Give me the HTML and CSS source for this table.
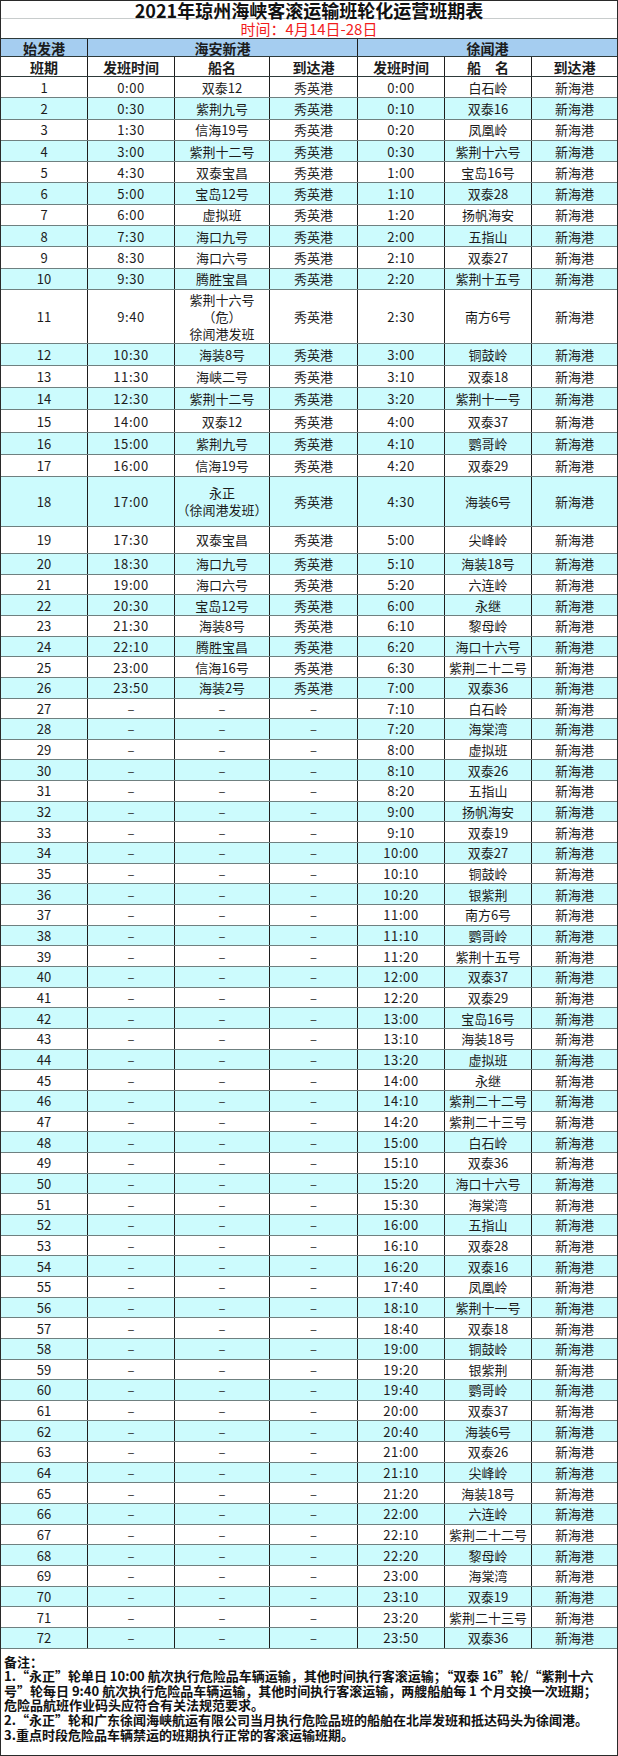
FILE: index.html
```html
<!DOCTYPE html>
<html lang="zh-CN">
<head>
<meta charset="utf-8">
<title>2021年琼州海峡客滚运输班轮化运营班期表</title>
<link rel="stylesheet" href="styles.css">
</head>
<body>
<div class="sheet">
  <div class="title">2021年琼州海峡客滚运输班轮化运营班期表</div>
  <div class="subtitle">时间：4月14日-28日</div>
  <div class="row hdr1"><span>始发港</span><span class="span3">海安新港</span><span class="span3">徐闻港</span></div>
  <div class="row hdr2"><span>班期</span><span>发班时间</span><span>船名</span><span>到达港</span><span>发班时间</span><span>船　名</span><span>到达港</span></div>

  <div class="row ha"><span>1</span><span class="t">0:00</span><span>双泰12</span><span>秀英港</span><span class="t">0:00</span><span>白石岭</span><span>新海港</span></div>
  <div class="row ha cy"><span>2</span><span class="t">0:30</span><span>紫荆九号</span><span>秀英港</span><span class="t">0:10</span><span>双泰16</span><span>新海港</span></div>
  <div class="row ha"><span>3</span><span class="t">1:30</span><span>信海19号</span><span>秀英港</span><span class="t">0:20</span><span>凤凰岭</span><span>新海港</span></div>
  <div class="row ha cy"><span>4</span><span class="t">3:00</span><span>紫荆十二号</span><span>秀英港</span><span class="t">0:30</span><span>紫荆十六号</span><span>新海港</span></div>
  <div class="row ha"><span>5</span><span class="t">4:30</span><span>双泰宝昌</span><span>秀英港</span><span class="t">1:00</span><span>宝岛16号</span><span>新海港</span></div>
  <div class="row ha cy"><span>6</span><span class="t">5:00</span><span>宝岛12号</span><span>秀英港</span><span class="t">1:10</span><span>双泰28</span><span>新海港</span></div>
  <div class="row ha"><span>7</span><span class="t">6:00</span><span>虚拟班</span><span>秀英港</span><span class="t">1:20</span><span>扬帆海安</span><span>新海港</span></div>
  <div class="row ha cy"><span>8</span><span class="t">7:30</span><span>海口九号</span><span>秀英港</span><span class="t">2:00</span><span>五指山</span><span>新海港</span></div>
  <div class="row ha"><span>9</span><span class="t">8:30</span><span>海口六号</span><span>秀英港</span><span class="t">2:10</span><span>双泰27</span><span>新海港</span></div>
  <div class="row ha cy"><span>10</span><span class="t">9:30</span><span>腾胜宝昌</span><span>秀英港</span><span class="t">2:20</span><span>紫荆十五号</span><span>新海港</span></div>
  <div class="row h11"><span>11</span><span class="t">9:40</span><span class="multi">紫荆十六号<br>（危）<br>徐闻港发班</span><span>秀英港</span><span class="t">2:30</span><span>南方6号</span><span>新海港</span></div>
  <div class="row hb cy"><span>12</span><span class="t">10:30</span><span>海装8号</span><span>秀英港</span><span class="t">3:00</span><span>铜鼓岭</span><span>新海港</span></div>
  <div class="row hb"><span>13</span><span class="t">11:30</span><span>海峡二号</span><span>秀英港</span><span class="t">3:10</span><span>双泰18</span><span>新海港</span></div>
  <div class="row hb cy"><span>14</span><span class="t">12:30</span><span>紫荆十二号</span><span>秀英港</span><span class="t">3:20</span><span>紫荆十一号</span><span>新海港</span></div>
  <div class="row hb"><span>15</span><span class="t">14:00</span><span>双泰12</span><span>秀英港</span><span class="t">4:00</span><span>双泰37</span><span>新海港</span></div>
  <div class="row hb cy"><span>16</span><span class="t">15:00</span><span>紫荆九号</span><span>秀英港</span><span class="t">4:10</span><span>鹦哥岭</span><span>新海港</span></div>
  <div class="row hb"><span>17</span><span class="t">16:00</span><span>信海19号</span><span>秀英港</span><span class="t">4:20</span><span>双泰29</span><span>新海港</span></div>
  <div class="row h18 cy"><span>18</span><span class="t">17:00</span><span class="multi">永正<br>（徐闻港发班）</span><span>秀英港</span><span class="t">4:30</span><span>海装6号</span><span>新海港</span></div>
  <div class="row h19"><span>19</span><span class="t">17:30</span><span>双泰宝昌</span><span>秀英港</span><span class="t">5:00</span><span>尖峰岭</span><span>新海港</span></div>
  <div class="row hc cy"><span>20</span><span class="t">18:30</span><span>海口九号</span><span>秀英港</span><span class="t">5:10</span><span>海装18号</span><span>新海港</span></div>
  <div class="row hc"><span>21</span><span class="t">19:00</span><span>海口六号</span><span>秀英港</span><span class="t">5:20</span><span>六连岭</span><span>新海港</span></div>
  <div class="row hc cy"><span>22</span><span class="t">20:30</span><span>宝岛12号</span><span>秀英港</span><span class="t">6:00</span><span>永继</span><span>新海港</span></div>
  <div class="row hc"><span>23</span><span class="t">21:30</span><span>海装8号</span><span>秀英港</span><span class="t">6:10</span><span>黎母岭</span><span>新海港</span></div>
  <div class="row hc cy"><span>24</span><span class="t">22:10</span><span>腾胜宝昌</span><span>秀英港</span><span class="t">6:20</span><span>海口十六号</span><span>新海港</span></div>
  <div class="row hc"><span>25</span><span class="t">23:00</span><span>信海16号</span><span>秀英港</span><span class="t">6:30</span><span>紫荆二十二号</span><span>新海港</span></div>
  <div class="row hc cy"><span>26</span><span class="t">23:50</span><span>海装2号</span><span>秀英港</span><span class="t">7:00</span><span>双泰36</span><span>新海港</span></div>
  <div class="row hc"><span>27</span><span class="d">–</span><span class="d">–</span><span class="d">–</span><span class="t">7:10</span><span>白石岭</span><span>新海港</span></div>
  <div class="row hc cy"><span>28</span><span class="d">–</span><span class="d">–</span><span class="d">–</span><span class="t">7:20</span><span>海棠湾</span><span>新海港</span></div>
  <div class="row hc"><span>29</span><span class="d">–</span><span class="d">–</span><span class="d">–</span><span class="t">8:00</span><span>虚拟班</span><span>新海港</span></div>
  <div class="row hc cy"><span>30</span><span class="d">–</span><span class="d">–</span><span class="d">–</span><span class="t">8:10</span><span>双泰26</span><span>新海港</span></div>
  <div class="row hc"><span>31</span><span class="d">–</span><span class="d">–</span><span class="d">–</span><span class="t">8:20</span><span>五指山</span><span>新海港</span></div>
  <div class="row hc cy"><span>32</span><span class="d">–</span><span class="d">–</span><span class="d">–</span><span class="t">9:00</span><span>扬帆海安</span><span>新海港</span></div>
  <div class="row hc"><span>33</span><span class="d">–</span><span class="d">–</span><span class="d">–</span><span class="t">9:10</span><span>双泰19</span><span>新海港</span></div>
  <div class="row hc cy"><span>34</span><span class="d">–</span><span class="d">–</span><span class="d">–</span><span class="t">10:00</span><span>双泰27</span><span>新海港</span></div>
  <div class="row hc"><span>35</span><span class="d">–</span><span class="d">–</span><span class="d">–</span><span class="t">10:10</span><span>铜鼓岭</span><span>新海港</span></div>
  <div class="row hc cy"><span>36</span><span class="d">–</span><span class="d">–</span><span class="d">–</span><span class="t">10:20</span><span>银紫荆</span><span>新海港</span></div>
  <div class="row hc"><span>37</span><span class="d">–</span><span class="d">–</span><span class="d">–</span><span class="t">11:00</span><span>南方6号</span><span>新海港</span></div>
  <div class="row hc cy"><span>38</span><span class="d">–</span><span class="d">–</span><span class="d">–</span><span class="t">11:10</span><span>鹦哥岭</span><span>新海港</span></div>
  <div class="row hc"><span>39</span><span class="d">–</span><span class="d">–</span><span class="d">–</span><span class="t">11:20</span><span>紫荆十五号</span><span>新海港</span></div>
  <div class="row hc cy"><span>40</span><span class="d">–</span><span class="d">–</span><span class="d">–</span><span class="t">12:00</span><span>双泰37</span><span>新海港</span></div>
  <div class="row hc"><span>41</span><span class="d">–</span><span class="d">–</span><span class="d">–</span><span class="t">12:20</span><span>双泰29</span><span>新海港</span></div>
  <div class="row hc cy"><span>42</span><span class="d">–</span><span class="d">–</span><span class="d">–</span><span class="t">13:00</span><span>宝岛16号</span><span>新海港</span></div>
  <div class="row hc"><span>43</span><span class="d">–</span><span class="d">–</span><span class="d">–</span><span class="t">13:10</span><span>海装18号</span><span>新海港</span></div>
  <div class="row hc cy"><span>44</span><span class="d">–</span><span class="d">–</span><span class="d">–</span><span class="t">13:20</span><span>虚拟班</span><span>新海港</span></div>
  <div class="row hc"><span>45</span><span class="d">–</span><span class="d">–</span><span class="d">–</span><span class="t">14:00</span><span>永继</span><span>新海港</span></div>
  <div class="row hc cy"><span>46</span><span class="d">–</span><span class="d">–</span><span class="d">–</span><span class="t">14:10</span><span>紫荆二十二号</span><span>新海港</span></div>
  <div class="row hc"><span>47</span><span class="d">–</span><span class="d">–</span><span class="d">–</span><span class="t">14:20</span><span>紫荆二十三号</span><span>新海港</span></div>
  <div class="row hc cy"><span>48</span><span class="d">–</span><span class="d">–</span><span class="d">–</span><span class="t">15:00</span><span>白石岭</span><span>新海港</span></div>
  <div class="row hc"><span>49</span><span class="d">–</span><span class="d">–</span><span class="d">–</span><span class="t">15:10</span><span>双泰36</span><span>新海港</span></div>
  <div class="row hc cy"><span>50</span><span class="d">–</span><span class="d">–</span><span class="d">–</span><span class="t">15:20</span><span>海口十六号</span><span>新海港</span></div>
  <div class="row hc"><span>51</span><span class="d">–</span><span class="d">–</span><span class="d">–</span><span class="t">15:30</span><span>海棠湾</span><span>新海港</span></div>
  <div class="row hc cy"><span>52</span><span class="d">–</span><span class="d">–</span><span class="d">–</span><span class="t">16:00</span><span>五指山</span><span>新海港</span></div>
  <div class="row hc"><span>53</span><span class="d">–</span><span class="d">–</span><span class="d">–</span><span class="t">16:10</span><span>双泰28</span><span>新海港</span></div>
  <div class="row hc cy"><span>54</span><span class="d">–</span><span class="d">–</span><span class="d">–</span><span class="t">16:20</span><span>双泰16</span><span>新海港</span></div>
  <div class="row hc"><span>55</span><span class="d">–</span><span class="d">–</span><span class="d">–</span><span class="t">17:40</span><span>凤凰岭</span><span>新海港</span></div>
  <div class="row hc cy"><span>56</span><span class="d">–</span><span class="d">–</span><span class="d">–</span><span class="t">18:10</span><span>紫荆十一号</span><span>新海港</span></div>
  <div class="row hc"><span>57</span><span class="d">–</span><span class="d">–</span><span class="d">–</span><span class="t">18:40</span><span>双泰18</span><span>新海港</span></div>
  <div class="row hc cy"><span>58</span><span class="d">–</span><span class="d">–</span><span class="d">–</span><span class="t">19:00</span><span>铜鼓岭</span><span>新海港</span></div>
  <div class="row hc"><span>59</span><span class="d">–</span><span class="d">–</span><span class="d">–</span><span class="t">19:20</span><span>银紫荆</span><span>新海港</span></div>
  <div class="row hc cy"><span>60</span><span class="d">–</span><span class="d">–</span><span class="d">–</span><span class="t">19:40</span><span>鹦哥岭</span><span>新海港</span></div>
  <div class="row hc"><span>61</span><span class="d">–</span><span class="d">–</span><span class="d">–</span><span class="t">20:00</span><span>双泰37</span><span>新海港</span></div>
  <div class="row hc cy"><span>62</span><span class="d">–</span><span class="d">–</span><span class="d">–</span><span class="t">20:40</span><span>海装6号</span><span>新海港</span></div>
  <div class="row hc"><span>63</span><span class="d">–</span><span class="d">–</span><span class="d">–</span><span class="t">21:00</span><span>双泰26</span><span>新海港</span></div>
  <div class="row hc cy"><span>64</span><span class="d">–</span><span class="d">–</span><span class="d">–</span><span class="t">21:10</span><span>尖峰岭</span><span>新海港</span></div>
  <div class="row hc"><span>65</span><span class="d">–</span><span class="d">–</span><span class="d">–</span><span class="t">21:20</span><span>海装18号</span><span>新海港</span></div>
  <div class="row hc cy"><span>66</span><span class="d">–</span><span class="d">–</span><span class="d">–</span><span class="t">22:00</span><span>六连岭</span><span>新海港</span></div>
  <div class="row hc"><span>67</span><span class="d">–</span><span class="d">–</span><span class="d">–</span><span class="t">22:10</span><span>紫荆二十二号</span><span>新海港</span></div>
  <div class="row hc cy"><span>68</span><span class="d">–</span><span class="d">–</span><span class="d">–</span><span class="t">22:20</span><span>黎母岭</span><span>新海港</span></div>
  <div class="row hc"><span>69</span><span class="d">–</span><span class="d">–</span><span class="d">–</span><span class="t">23:00</span><span>海棠湾</span><span>新海港</span></div>
  <div class="row hc cy"><span>70</span><span class="d">–</span><span class="d">–</span><span class="d">–</span><span class="t">23:10</span><span>双泰19</span><span>新海港</span></div>
  <div class="row hc"><span>71</span><span class="d">–</span><span class="d">–</span><span class="d">–</span><span class="t">23:20</span><span>紫荆二十三号</span><span>新海港</span></div>
  <div class="row hc cy"><span>72</span><span class="d">–</span><span class="d">–</span><span class="d">–</span><span class="t">23:50</span><span>双泰36</span><span>新海港</span></div>

  <div class="notes">
    <div class="nl">备注：</div>
    <div class="nl">1.“永正”轮单日 10:00 航次执行危险品车辆运输，其他时间执行客滚运输；“双泰 16”轮/“紫荆十六</div>
    <div class="nl">号”轮每日 9:40 航次执行危险品车辆运输，其他时间执行客滚运输，两艘船舶每 1 个月交换一次班期；</div>
    <div class="nl">危险品航班作业码头应符合有关法规范要求。</div>
    <div class="nl">2.“永正”轮和广东徐闻海峡航运有限公司当月执行危险品班的船舶在北岸发班和抵达码头为徐闻港。</div>
    <div class="nl">3.重点时段危险品车辆禁运的班期执行正常的客滚运输班期。</div>
  </div>
</div>
</body>
</html>
```

FILE: styles.css
```css
* { box-sizing: border-box; }

html, body {
  margin: 0;
  padding: 0;
  background: #ffffff;
}

body {
  font-family: "Noto Sans CJK SC", "Noto Sans", sans-serif;
  color: #1c1c1c;
  width: 618px;
  height: 1756px;
  overflow: hidden;
}

.sheet {
  width: 618px;
  height: 1756px;
  border: 1px solid #2a2a2a;
  display: flex;
  flex-direction: column;
}

.title {
  height: 18px;
  line-height: 19px;
  text-align: center;
  font-size: 18px;
  font-weight: bold;
  color: #111;
  border-bottom: 1px solid #c8cccc;
  white-space: nowrap;
}

.subtitle {
  height: 20px;
  line-height: 20px;
  text-align: center;
  font-size: 15px;
  color: #f21c1c;
  border-bottom: 1px solid #2e3a3a;
  white-space: nowrap;
}

.row {
  display: grid;
  grid-template-columns: 87px 87px 95px 88px 87px 87px 1fr;
  border-bottom: 1px solid #6f8080;
  font-size: 13px;
  background: #ffffff;
  flex: none;
}

.row > span {
  display: flex;
  align-items: center;
  justify-content: center;
  text-align: center;
  border-right: 1px solid #1e1e1e;
  white-space: nowrap;
  line-height: 1;
}

.row > span:last-child {
  border-right: 0;
}

.row .span3 {
  grid-column: span 3;
}

.hdr1 {
  height: 18px;
  background: #a5cdf0;
  font-weight: bold;
  font-size: 14px;
  border-bottom-color: #2e3a3a;
}

.hdr2 {
  height: 20px;
  font-weight: bold;
  font-size: 14px;
  border-bottom-color: #2e3a3a;
}

.cy {
  background: #ccfbfd;
}

.ha { height: 21.3px; }
.hb { height: 22.17px; }
.hc { height: 20.66px; }
.h11 { height: 54px; }
.h18 { height: 50px; }
.h19 { height: 27px; }

.row .t {
  letter-spacing: 0.6px;
}

.row .d {
  color: #333;
}

.row .multi {
  line-height: 17px;
  white-space: nowrap;
}

.notes {
  flex: 1;
  padding: 6px 0 0 3px;
  font-size: 13px;
  line-height: 14.6px;
  color: #111;
  font-weight: bold;
}

.nl {
  white-space: nowrap;
}
```
